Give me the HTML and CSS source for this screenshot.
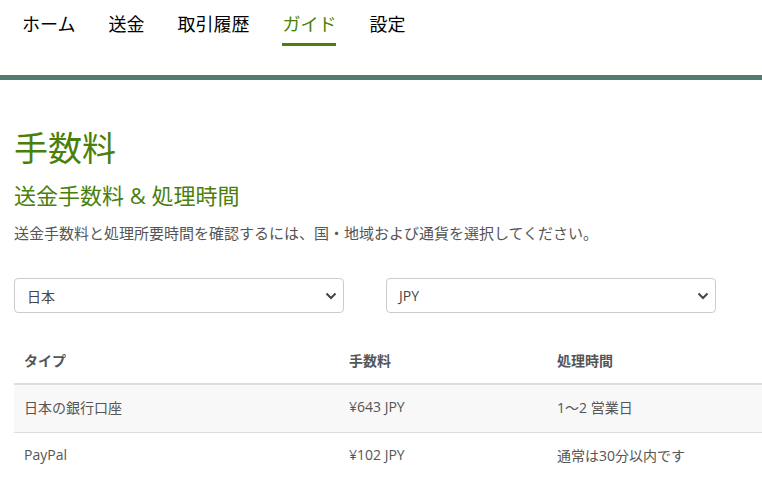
FILE: index.html
```html
<!DOCTYPE html>
<html lang="ja">
<head>
  <meta charset="UTF-8" />
  <meta name="viewport" content="width=device-width, initial-scale=1.0"/>
  <title>手数料</title>
  <link rel="stylesheet" href="styles.css">
</head>
<body>
  <nav class="topnav">
    <a href="#" class="nav-item">ホーム</a>
    <a href="#" class="nav-item">送金</a>
    <a href="#" class="nav-item">取引履歴</a>
    <a href="#" class="nav-item active">ガイド</a>
    <a href="#" class="nav-item">設定</a>
  </nav>
  <div class="nav-bar"></div>

  <div class="content">
    <h1>手数料</h1>
    <h2>送金手数料 &amp; 処理時間</h2>
    <p class="lead">送金手数料と処理所要時間を確認するには、国・地域および通貨を選択してください。</p>

    <div class="filters">
      <div class="select-box">
        <span>日本</span>
        <svg class="chevron" width="12" height="8" viewBox="0 0 12 8"><path d="M1.5 1.5 L6 6 L10.5 1.5" fill="none" stroke="#444" stroke-width="2"/></svg>
      </div>
      <div class="select-box">
        <span>JPY</span>
        <svg class="chevron" width="12" height="8" viewBox="0 0 12 8"><path d="M1.5 1.5 L6 6 L10.5 1.5" fill="none" stroke="#444" stroke-width="2"/></svg>
      </div>
    </div>

    <table class="fees">
      <thead>
        <tr>
          <th class="col-type">タイプ</th>
          <th class="col-fee">手数料</th>
          <th>処理時間</th>
        </tr>
      </thead>
      <tbody>
        <tr class="alt">
          <td>日本の銀行口座</td>
          <td>¥643 JPY</td>
          <td>1～2 営業日</td>
        </tr>
        <tr>
          <td>PayPal</td>
          <td>¥102 JPY</td>
          <td>通常は30分以内です</td>
        </tr>
      </tbody>
    </table>
  </div>
</body>
</html>
```

FILE: styles.css
```css
body {
  font-family: "Open Sans", "Noto Sans CJK JP", sans-serif;
  margin: 0;
  background: white;
  color: #000;
  overflow: hidden;
}

.topnav {
  display: flex;
  gap: 33px;
  padding: 12px 22px 0;
  height: 63px;
  box-sizing: border-box;
}

.nav-item {
  color: #000;
  text-decoration: none;
  font-size: 18px;
  line-height: 24px;
  height: 34px;
  box-sizing: border-box;
}

.nav-item.active {
  color: #4a7f0a;
  border-bottom: 3px solid #4a7f0a;
}

.nav-bar {
  height: 5px;
  background: #527b72;
  margin-top: 12px;
}

.content {
  padding: 0 0 0 14px;
}

h1 {
  margin: 46px 0 0;
  font-size: 34px;
  font-weight: 400;
  line-height: 44px;
  color: #4a7f0a;
}

h2 {
  margin: 10px 0 0;
  font-size: 22px;
  font-weight: 400;
  line-height: 30px;
  color: #4a7f0a;
}

.lead {
  margin: 13px 0 0;
  font-size: 15px;
  line-height: 20px;
  color: #555;
}

.filters {
  display: flex;
  gap: 42px;
  margin-top: 35px;
}

.select-box {
  width: 330px;
  height: 35px;
  box-sizing: border-box;
  border: 1px solid #ccc;
  border-radius: 4px;
  display: flex;
  align-items: center;
  justify-content: space-between;
  padding: 0 6px 0 12px;
  font-size: 14px;
  color: #444;
}

.fees {
  width: 100%;
  border-collapse: collapse;
  margin-top: 32px;
  font-size: 14px;
  color: #555;
}

.fees th,
.fees td {
  text-align: left;
  padding: 0 10px;
}

.fees th {
  padding-top: 8px;
  padding-bottom: 14px;
  line-height: 16px;
  font-weight: 700;
  border-bottom: 2px solid #ddd;
}

.fees td {
  height: 43px;
  padding-bottom: 4px;
  border-bottom: 1px solid #ddd;
}

.fees tbody tr:last-child td {
  border-bottom: none;
}

.fees .alt {
  background: #f8f8f8;
}

.col-type {
  width: 305px;
}

.col-fee {
  width: 188px;
}
```
